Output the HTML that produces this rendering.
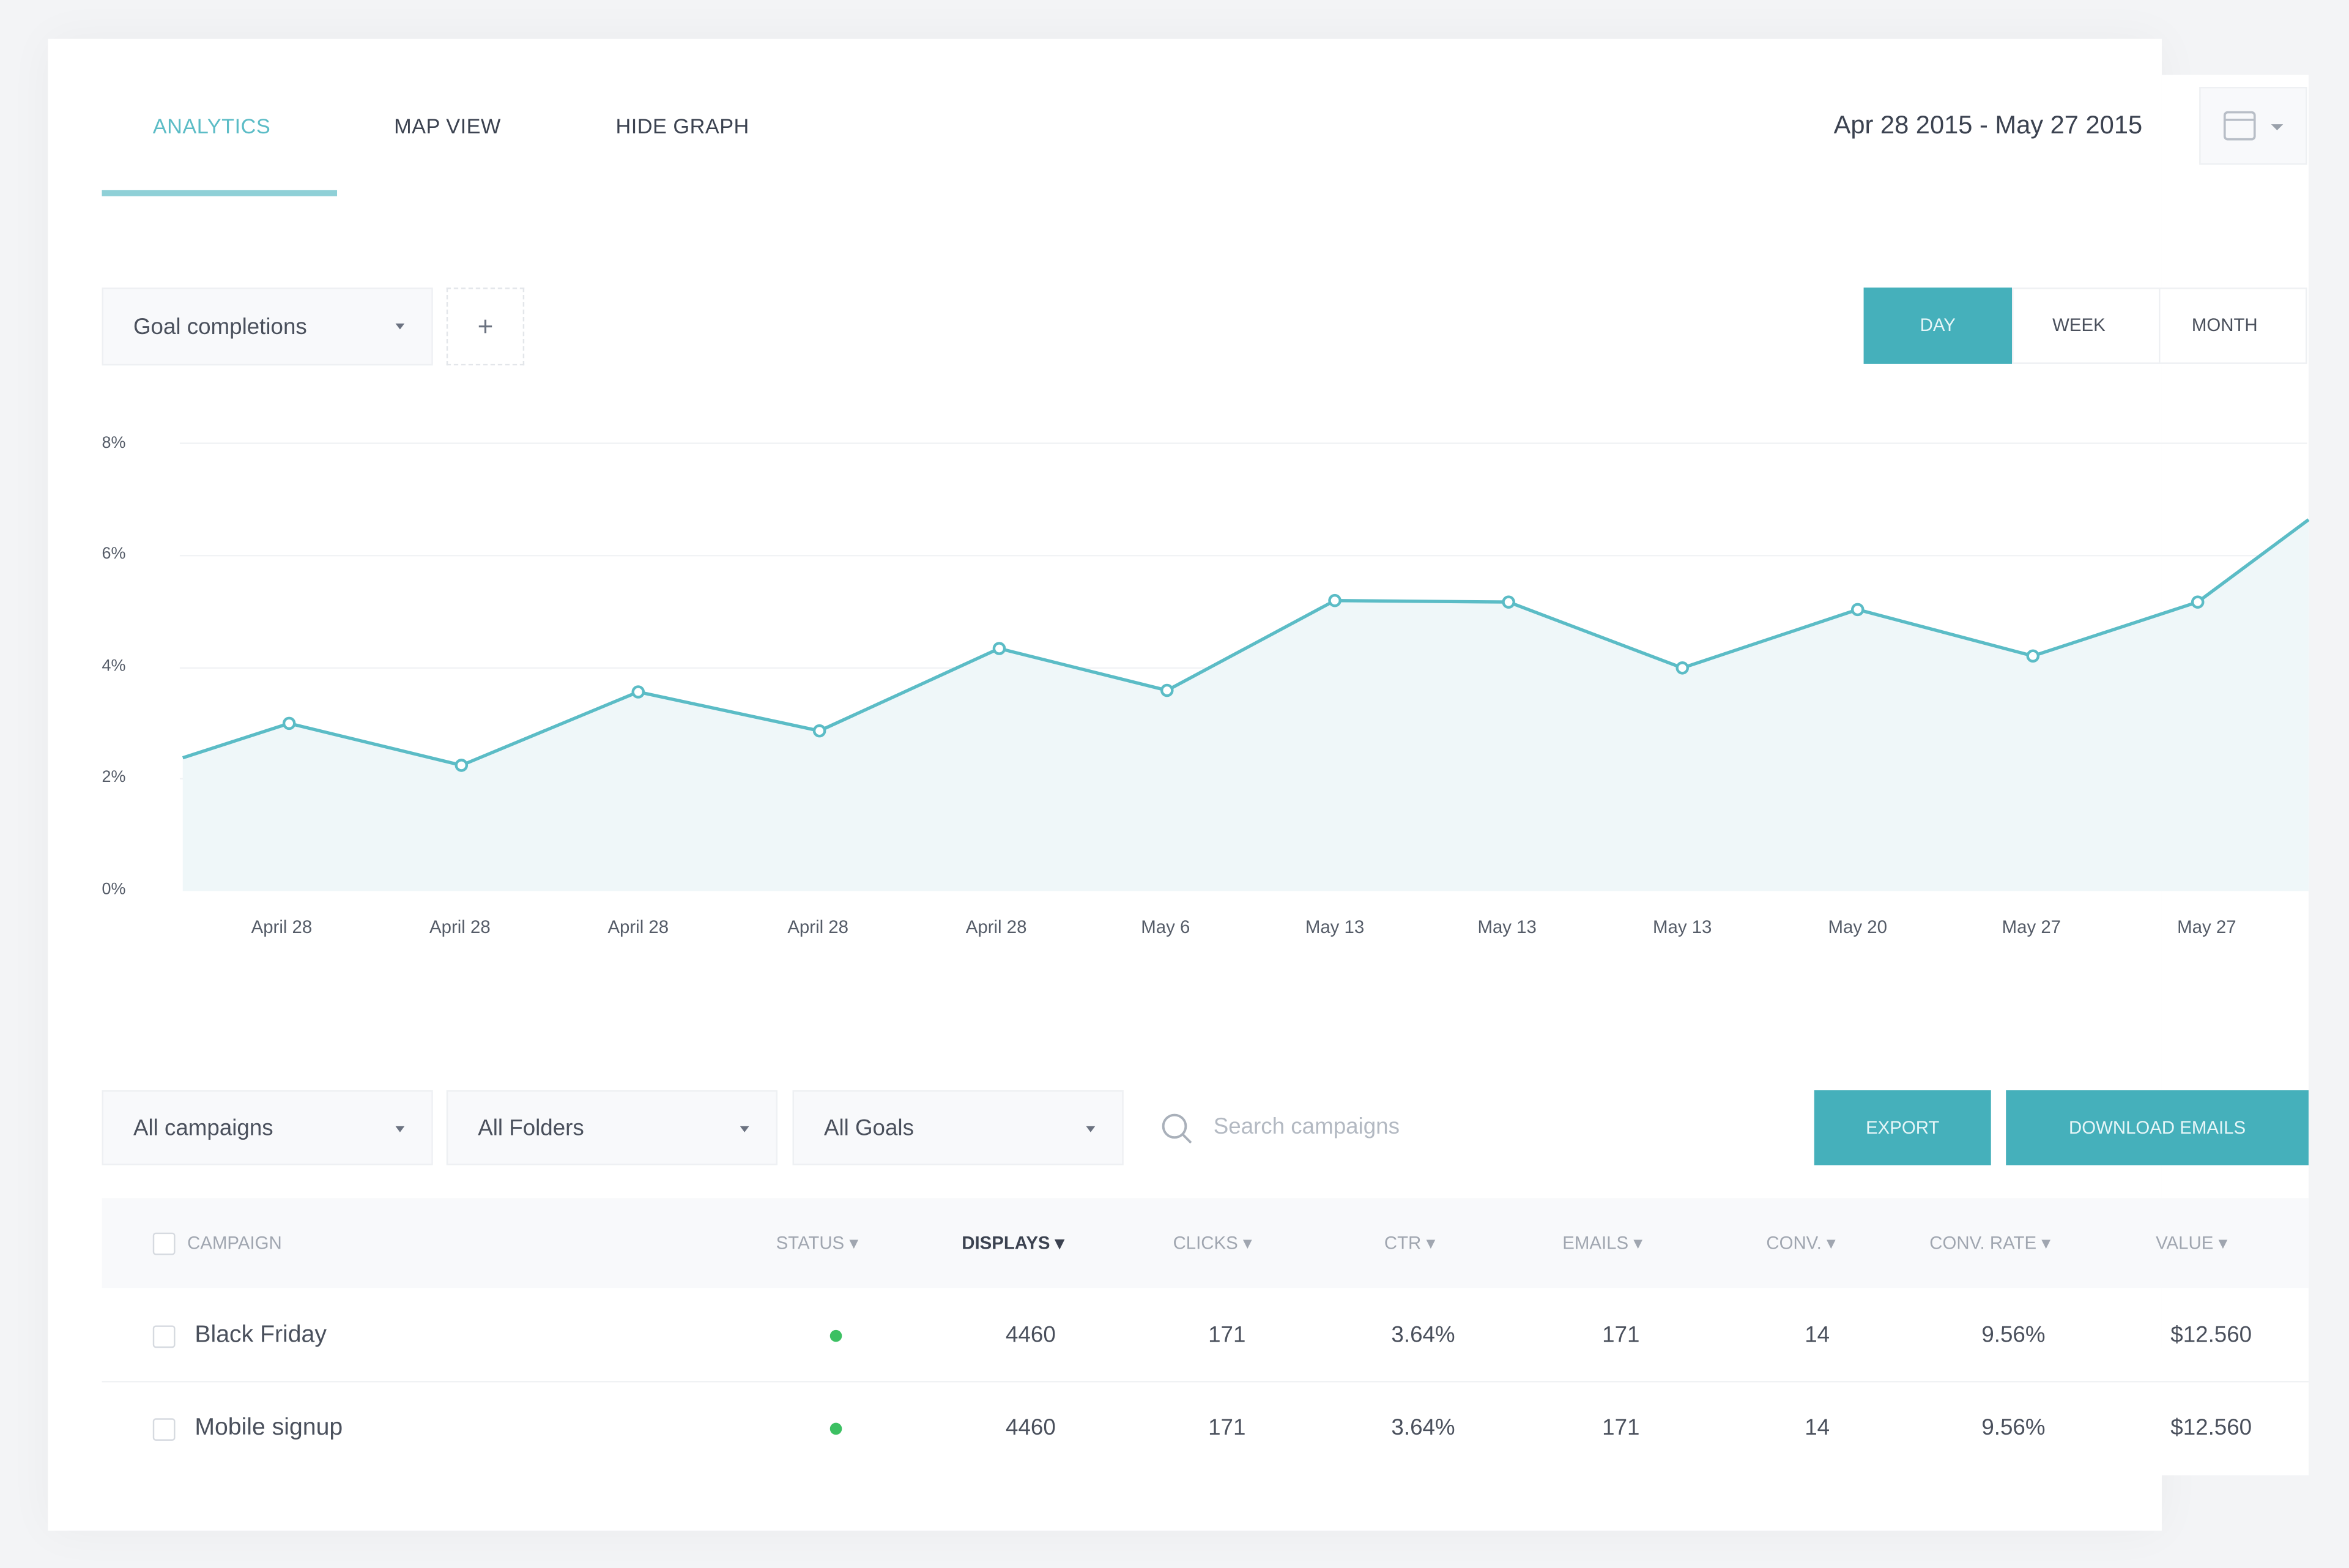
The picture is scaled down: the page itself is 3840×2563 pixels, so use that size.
<!DOCTYPE html>
<html><head><meta charset="utf-8"><style>
html,body{margin:0;padding:0;}
body{width:3840px;height:2563px;overflow:hidden;background:#f3f4f6;font-family:"Liberation Sans",sans-serif;}
#s{position:absolute;left:0;top:0;width:1568px;height:1047px;transform:scale(2.449,2.448);transform-origin:0 0;}
.a{position:absolute;}
.card{background:#fff;}
.tab{font-size:14px;color:#3b4250;top:76px;letter-spacing:.2px}
.sel{background:#f8f9fb;border:1px solid #eef0f3;height:50px;font-size:15px;color:#4a505c;line-height:50px;padding-left:20px;box-sizing:border-box}
.sel:after{content:"";position:absolute;right:18px;top:23px;border:3.5px solid transparent;border-top:4px solid #6b7280;}
.ax{font-size:11px;color:#555c68;}
.xl{font-size:12px;color:#555c68;width:80px;text-align:center;top:612px}
.th{font-size:12px;color:#a0a6b0;top:823px}
.td{font-size:15px;color:#4a505c;width:80px;text-align:center}
.btn{background:#45b0bb;color:#e6f6f8;font-size:12px;text-align:center;line-height:50px;height:50px}
.cb{width:13px;height:13px;border:1px solid #d6dae0;border-radius:2px;background:#fff}
</style></head><body><div id="s">
<div class="a card" style="left:32px;top:26px;width:1411px;height:996px;box-shadow:0 0 30px rgba(0,0,0,.04)"></div>
<div class="a card" style="left:1443px;top:50px;width:98px;height:935px"></div>
<div class="a card" style="left:1180px;top:900px;width:361px;height:85px"></div>

<div class="a tab" style="left:102px;color:#5bbcc6">ANALYTICS</div>
<div class="a" style="left:68px;top:127px;width:157px;height:4px;background:#8fd0d7"></div>
<div class="a tab" style="left:263px">MAP VIEW</div>
<div class="a tab" style="left:411px">HIDE GRAPH</div>
<div class="a" style="left:1224px;top:74px;font-size:17px;color:#3b4250">Apr 28 2015 - May 27 2015</div>
<div class="a" style="left:1468px;top:58px;width:72px;height:52px;background:#f8f9fb;border:1px solid #eef0f3;box-sizing:border-box"></div>
<svg class="a" style="left:1484px;top:73px" width="48" height="24"><rect x="1" y="2" width="20" height="18" rx="2" fill="none" stroke="#b8bec7" stroke-width="1.5"/><line x1="1" y1="7" x2="21" y2="7" stroke="#b8bec7" stroke-width="1.5"/><path d="M32 10l4 4 4-4z" fill="#9aa1ab"/></svg>

<div class="a sel" style="left:68px;top:192px;width:221px;height:52px;line-height:52px">Goal completions</div>
<div class="a" style="left:298px;top:192px;width:52px;height:52px;border:1px dashed #e3e6ea;box-sizing:border-box;text-align:center;line-height:50px;font-size:18px;color:#6b7280">+</div>
<div class="a btn" style="left:1244px;top:192px;width:99px;height:51px;line-height:51px">DAY</div>
<div class="a" style="left:1343px;top:192px;width:197px;height:51px;border:1px solid #eef0f3;box-sizing:border-box;background:#fff"></div>
<div class="a" style="left:1441px;top:193px;width:1px;height:49px;background:#eef0f3"></div>
<div class="a" style="left:1370px;top:210px;font-size:12px;color:#4a505c">WEEK</div>
<div class="a" style="left:1463px;top:210px;font-size:12px;color:#4a505c">MONTH</div>

<div class="a ax" style="left:68px;top:290px">8%</div>
<div class="a ax" style="left:68px;top:364px">6%</div>
<div class="a ax" style="left:68px;top:439px">4%</div>
<div class="a ax" style="left:68px;top:513px">2%</div>
<div class="a ax" style="left:68px;top:588px">0%</div>
<svg class="a" style="left:0;top:0" width="1568" height="640">
<g stroke="#f1f3f5" stroke-width="1"><line x1="120" y1="296" x2="1540" y2="296"/><line x1="120" y1="371" x2="1540" y2="371"/><line x1="120" y1="446" x2="1540" y2="446"/><line x1="120" y1="520" x2="1540" y2="520"/></g>
<path d="M122 506L193 483L308 511L426 462L547 488L667 433L779 461L891 401L1007 402L1123 446L1240 407L1357 438L1467 402L1541 347L1541 595L122 595Z" fill="#eff7f9"/>
<path d="M122 506L193 483L308 511L426 462L547 488L667 433L779 461L891 401L1007 402L1123 446L1240 407L1357 438L1467 402L1541 347" fill="none" stroke="#5bbcc6" stroke-width="2.2"/>
<g fill="#fff" stroke="#5bbcc6" stroke-width="1.8"><circle cx="193" cy="483" r="3.5"/><circle cx="308" cy="511" r="3.5"/><circle cx="426" cy="462" r="3.5"/><circle cx="547" cy="488" r="3.5"/><circle cx="667" cy="433" r="3.5"/><circle cx="779" cy="461" r="3.5"/><circle cx="891" cy="401" r="3.5"/><circle cx="1007" cy="402" r="3.5"/><circle cx="1123" cy="446" r="3.5"/><circle cx="1240" cy="407" r="3.5"/><circle cx="1357" cy="438" r="3.5"/><circle cx="1467" cy="402" r="3.5"/></g>
</svg>
<div class="a xl" style="left:148px">April 28</div>
<div class="a xl" style="left:267px">April 28</div>
<div class="a xl" style="left:386px">April 28</div>
<div class="a xl" style="left:506px">April 28</div>
<div class="a xl" style="left:625px">April 28</div>
<div class="a xl" style="left:738px">May 6</div>
<div class="a xl" style="left:851px">May 13</div>
<div class="a xl" style="left:966px">May 13</div>
<div class="a xl" style="left:1083px">May 13</div>
<div class="a xl" style="left:1200px">May 20</div>
<div class="a xl" style="left:1316px">May 27</div>
<div class="a xl" style="left:1433px">May 27</div>

<div class="a sel" style="left:68px;top:728px;width:221px">All campaigns</div>
<div class="a sel" style="left:298px;top:728px;width:221px">All Folders</div>
<div class="a sel" style="left:529px;top:728px;width:221px">All Goals</div>
<svg class="a" style="left:774px;top:742px" width="24" height="24"><circle cx="10" cy="10" r="7.5" fill="none" stroke="#a9b0ba" stroke-width="1.6"/><line x1="15.5" y1="15.5" x2="21" y2="21" stroke="#a9b0ba" stroke-width="1.6"/></svg>
<div class="a" style="left:810px;top:744px;font-size:15px;color:#b3b9c2">Search campaigns</div>
<div class="a btn" style="left:1211px;top:728px;width:118px">EXPORT</div>
<div class="a btn" style="left:1339px;top:728px;width:202px">DOWNLOAD EMAILS</div>

<div class="a" style="left:68px;top:800px;width:1473px;height:60px;background:#f8f9fb"></div>
<div class="a cb" style="left:102px;top:823px"></div>
<div class="a th" style="left:125px">CAMPAIGN</div>
<div class="a th" style="left:518px">STATUS ▾</div>
<div class="a th" style="left:642px;color:#3b4250;font-weight:bold">DISPLAYS ▾</div>
<div class="a th" style="left:783px">CLICKS ▾</div>
<div class="a th" style="left:924px">CTR ▾</div>
<div class="a th" style="left:1043px">EMAILS ▾</div>
<div class="a th" style="left:1179px">CONV. ▾</div>
<div class="a th" style="left:1288px">CONV. RATE ▾</div>
<div class="a th" style="left:1439px">VALUE ▾</div>

<div class="a cb" style="left:102px;top:885px"></div>
<div class="a" style="left:130px;top:883px;font-size:16px;color:#4a505c">Black Friday</div>
<div class="a" style="left:554px;top:888px;width:8px;height:8px;border-radius:50%;background:#3cc062"></div>
<div class="a td" style="left:648px;top:883px">4460</div>
<div class="a td" style="left:779px;top:883px">171</div>
<div class="a td" style="left:910px;top:883px">3.64%</div>
<div class="a td" style="left:1042px;top:883px">171</div>
<div class="a td" style="left:1173px;top:883px">14</div>
<div class="a td" style="left:1304px;top:883px">9.56%</div>
<div class="a td" style="left:1436px;top:883px">$12.560</div>
<div class="a" style="left:68px;top:922px;width:1473px;height:1px;background:#f0f2f4"></div>

<div class="a cb" style="left:102px;top:947px"></div>
<div class="a" style="left:130px;top:945px;font-size:16px;color:#4a505c">Mobile signup</div>
<div class="a" style="left:554px;top:950px;width:8px;height:8px;border-radius:50%;background:#3cc062"></div>
<div class="a td" style="left:648px;top:945px">4460</div>
<div class="a td" style="left:779px;top:945px">171</div>
<div class="a td" style="left:910px;top:945px">3.64%</div>
<div class="a td" style="left:1042px;top:945px">171</div>
<div class="a td" style="left:1173px;top:945px">14</div>
<div class="a td" style="left:1304px;top:945px">9.56%</div>
<div class="a td" style="left:1436px;top:945px">$12.560</div>
</div></body></html>
